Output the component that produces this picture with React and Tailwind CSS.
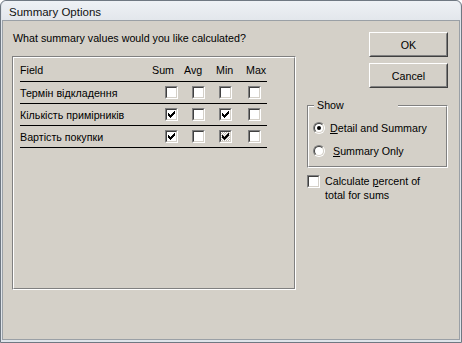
import React from "react";

function Check({ checked, focus }) {
  return (
    <div className="w-[13px] h-[13px] border border-t-[#808080] border-l-[#808080] border-b-white border-r-white">
      <div
        className={
          focus
            ? "w-full h-full border border-t-[#404040] border-l-[#404040] border-b-[#d4d0c8] border-r-[#d4d0c8] bg-[repeating-conic-gradient(#bdb9b2_0_25%,#ffffff_0_50%)] bg-[length:2px_2px]"
            : "w-full h-full border border-t-[#404040] border-l-[#404040] border-b-[#d4d0c8] border-r-[#d4d0c8] bg-white"
        }
      >
        {checked && (
          <svg width="9" height="9" viewBox="0 0 9 9" shapeRendering="crispEdges" className="block">
            {[3, 4, 5, 4, 3, 2, 1].map((t, i) => (
              <rect key={i} x={i + 1} y={t} width="1" height="3" fill="#000" />
            ))}
          </svg>
        )}
      </div>
    </div>
  );
}

function Radio({ checked }) {
  return (
    <div className="w-[12px] h-[12px] rounded-full border border-t-[#808080] border-l-[#808080] border-b-white border-r-white">
      <div className="w-full h-full rounded-full border border-t-[#404040] border-l-[#404040] border-b-[#d4d0c8] border-r-[#d4d0c8] bg-white flex items-center justify-center">
        {checked && <div className="w-[4px] h-[4px] rounded-full bg-black" />}
      </div>
    </div>
  );
}

function Button({ children, className }) {
  return (
    <div className={"w-[79px] h-[25px] border border-t-white border-l-white border-b-[#404040] border-r-[#404040] " + (className || "")}>
      <div className="w-full h-full border border-t-[#d4d0c8] border-l-[#d4d0c8] border-b-[#808080] border-r-[#808080] flex items-center justify-center">
        {children}
      </div>
    </div>
  );
}

const rows = [
  { name: "Термін відкладення", v: [false, false, false, false] },
  { name: "Кількість примірників", v: [true, false, true, false] },
  { name: "Вартість покупки", v: [true, false, true, false], focus: 2 },
];

const cbMargins = ["ml-[13px]", "ml-[8px]", "ml-[3px]", "ml-[2px]"];

export default function App() {
  return (
    <div className="w-[462px] h-[343px] flex flex-col border border-[#6f7882] rounded-t-[6px] bg-[#dfe4ea] px-px pb-[2px] text-[10.7px] leading-[14px] text-black font-['Liberation_Sans',Arial,sans-serif]">
      <div className="h-[19px] shrink-0 pl-[7px] pt-[4px] text-[11.5px] leading-[14px] text-[#111] bg-gradient-to-b from-[#eef1f5] to-[#e3e7ec] rounded-t-[5px]">
        Summary Options
      </div>
      <div className="flex-1 flex border border-[#9aa0a6] bg-[#d4d0c8] pl-[9px]">
        <div className="flex flex-col pt-[10px]">
          <div className="pl-px">What summary values would you like calculated?</div>
          <div className="mt-[11px] w-[284px] h-[234px] border border-t-[#808080] border-l-[#808080] border-b-white border-r-white">
            <div className="w-full h-full border border-t-white border-l-white border-b-[#808080] border-r-[#808080] pl-[6px] pt-px">
              <div className="w-[247px]">
                <div className="grid grid-cols-[132px_32px_32px_30px_21px] h-[23px] items-center border-b border-black">
                  <div>Field</div>
                  <div>Sum</div>
                  <div>Avg</div>
                  <div>Min</div>
                  <div>Max</div>
                </div>
                {rows.map((r) => (
                  <div key={r.name} className="grid grid-cols-[132px_32px_32px_30px_21px] h-[22px] items-center border-b border-black">
                    <div>{r.name}</div>
                    {r.v.map((c, i) => (
                      <div key={i} className={cbMargins[i]}>
                        <Check checked={c} focus={r.focus === i} />
                      </div>
                    ))}
                  </div>
                ))}
              </div>
            </div>
          </div>
        </div>
        <div className="ml-[11px] w-[141px] flex flex-col pt-[11px]">
          <Button className="self-end">OK</Button>
          <Button className="self-end mt-[6px]">Cancel</Button>
          <div className="relative mt-[17px] h-[63px] border border-t-[#808080] border-l-[#808080] border-b-white border-r-white">
            <div className="w-full h-full border border-t-white border-l-white border-b-[#808080] border-r-[#808080] pt-[9px] pl-[4px]">
              <div className="h-[23px] flex items-center">
                <Radio checked />
                <span className="ml-[5px]">
                  <span className="underline">D</span>etail and Summary
                </span>
              </div>
              <div className="h-[23px] flex items-center">
                <Radio />
                <span className="ml-[8px]">
                  <span className="underline">S</span>ummary Only
                </span>
              </div>
            </div>
            <div className="absolute left-[6px] top-[-8px] w-[84px] pl-[3px] bg-[#d4d0c8]">Show</div>
          </div>
          <div className="mt-[7px] flex items-start">
            <Check />
            <div className="ml-[5px] -mt-[1px]">
              Calculate <span className="underline">p</span>ercent of
              <br />
              total for sums
            </div>
          </div>
        </div>
      </div>
    </div>
  );
}
